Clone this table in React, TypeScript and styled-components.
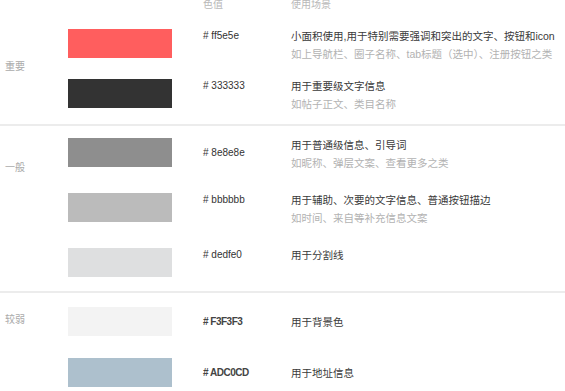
import React from "react";
import styled, { createGlobalStyle } from "styled-components";

type Swatch = {
  color: string;
  hex: string;
  upper?: boolean;
  hexCentered?: boolean;
  descCentered?: boolean;
  title: string;
  note?: string;
};

type Group = {
  label: string;
  labelTop: number;
  padTop: number;
  padBottom: number;
  gap: number;
  items: Swatch[];
};

const groups: Group[] = [
  {
    label: "重要",
    labelTop: 50,
    padTop: 19,
    padBottom: 16,
    gap: 21,
    items: [
      {
        color: "#ff5e5e",
        hex: "# ff5e5e",
        title: "小面积使用,用于特别需要强调和突出的文字、按钮和icon",
        note: "如上导航栏、圈子名称、tab标题（选中）、注册按钮之类",
      },
      {
        color: "#333333",
        hex: "# 333333",
        title: "用于重要级文字信息",
        note: "如帖子正文、类目名称",
      },
    ],
  },
  {
    label: "一般",
    labelTop: 35,
    padTop: 12,
    padBottom: 14,
    gap: 26,
    items: [
      {
        color: "#8e8e8e",
        hex: "# 8e8e8e",
        hexCentered: true,
        title: "用于普通级信息、引导词",
        note: "如昵称、弹层文案、查看更多之类",
      },
      {
        color: "#bbbbbb",
        hex: "# bbbbbb",
        title: "用于辅助、次要的文字信息、普通按钮描边",
        note: "如时间、来自等补充信息文案",
      },
      {
        color: "#dedfe0",
        hex: "# dedfe0",
        title: "用于分割线",
      },
    ],
  },
  {
    label: "较弱",
    labelTop: 20,
    padTop: 14,
    padBottom: 0,
    gap: 22,
    items: [
      {
        color: "#f3f3f3",
        hex: "# F3F3F3",
        upper: true,
        hexCentered: true,
        descCentered: true,
        title: "用于背景色",
      },
      {
        color: "#adc0cd",
        hex: "# ADC0CD",
        upper: true,
        hexCentered: true,
        descCentered: true,
        title: "用于地址信息",
      },
    ],
  },
];

export default function App() {
  return (
    <>
      <GlobalStyle />
      <StyledPage>
        <StyledHeader>
          <StyledHeadCell $width={203}></StyledHeadCell>
          <StyledHeadCell $width={88}>色值</StyledHeadCell>
          <StyledHeadCell>使用场景</StyledHeadCell>
        </StyledHeader>
        {groups.map((group, i) => (
          <React.Fragment key={group.label}>
            {i > 0 && <StyledDivider />}
            <StyledSection $padTop={group.padTop} $padBottom={group.padBottom}>
              <StyledLabel $top={group.labelTop - group.padTop}>
                {group.label}
              </StyledLabel>
              <StyledRows $gap={group.gap}>
                {group.items.map((item) => (
                  <StyledRow key={item.hex}>
                    <StyledSwatch $color={item.color} />
                    <StyledHex $upper={item.upper} $centered={item.hexCentered}>
                      {item.hex}
                    </StyledHex>
                    <StyledDesc $centered={item.descCentered}>
                      <StyledTitle>{item.title}</StyledTitle>
                      {item.note && <StyledNote>{item.note}</StyledNote>}
                    </StyledDesc>
                  </StyledRow>
                ))}
              </StyledRows>
            </StyledSection>
          </React.Fragment>
        ))}
      </StyledPage>
    </>
  );
}

const GlobalStyle = createGlobalStyle`
  html, body {
    margin: 0;
    padding: 0;
    background: #ffffff;
  }
  body {
    font-family: "Liberation Sans", "Noto Sans CJK SC", sans-serif;
    overflow: hidden;
  }
`;

const StyledPage = styled.div`
  width: 565px;
  height: 391px;
  overflow: hidden;
  display: flex;
  flex-direction: column;
`;

const StyledHeader = styled.div`
  display: flex;
  height: 10px;
`;

const StyledHeadCell = styled.div<{ $width?: number }>`
  flex: ${(p) => (p.$width ? `0 0 ${p.$width}px` : "1")};
  font-size: 10px;
  line-height: 10px;
  color: #b8b8b8;
`;

const StyledDivider = styled.div`
  height: 2px;
  background: #ececec;
`;

const StyledSection = styled.div<{ $padTop: number; $padBottom: number }>`
  display: flex;
  padding: ${(p) => p.$padTop}px 0 ${(p) => p.$padBottom}px;
`;

const StyledLabel = styled.div<{ $top: number }>`
  flex: 0 0 63px;
  padding-left: 5px;
  margin-top: ${(p) => p.$top}px;
  font-size: 10px;
  line-height: 14px;
  color: #aaaaaa;
`;

const StyledRows = styled.div<{ $gap: number }>`
  flex: 1;
  display: flex;
  flex-direction: column;
  gap: ${(p) => p.$gap}px;
`;

const StyledRow = styled.div`
  display: flex;
  height: 29px;
`;

const StyledSwatch = styled.div<{ $color: string }>`
  flex: 0 0 104px;
  margin-right: 31px;
  background: ${(p) => p.$color};
`;

const StyledHex = styled.div<{ $upper?: boolean; $centered?: boolean }>`
  flex: 0 0 88px;
  align-self: ${(p) => (p.$centered ? "center" : "flex-start")};
  font-size: 10px;
  font-weight: ${(p) => (p.$upper ? 700 : 400)};
  letter-spacing: ${(p) => (p.$upper ? "-0.5px" : "0")};
  line-height: 14px;
  color: ${(p) => (p.$upper ? "#444444" : "#333333")};
`;

const StyledDesc = styled.div<{ $centered?: boolean }>`
  flex: 1;
  align-self: ${(p) => (p.$centered ? "center" : "flex-start")};
  display: flex;
  flex-direction: column;
  gap: 4px;
  white-space: nowrap;
`;

const StyledTitle = styled.div`
  font-size: 10.5px;
  line-height: 14px;
  color: #3a3a3a;
`;

const StyledNote = styled.div`
  font-size: 10.5px;
  line-height: 14px;
  color: #b2b2b2;
`;
